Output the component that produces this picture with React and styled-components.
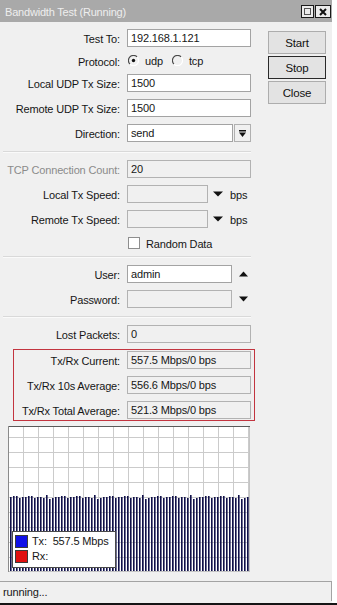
import React from 'react';
import styled, { createGlobalStyle } from 'styled-components';

const Global = createGlobalStyle`
  html, body { margin: 0; padding: 0; background: #fff; }
  body { font-family: "Liberation Sans", Arial, sans-serif; }
  #root { width: 337px; height: 605px; }
`;

const Page = styled.div`
  width: 337px;
  height: 605px;
  box-sizing: border-box;
  border-bottom: 2px solid #151515;
  background: #fff;
  overflow: hidden;
`;

const Window = styled.div`
  width: 332px;
  height: 603px;
  background: #f0f0f0;
  display: flex;
  flex-direction: column;
  font-size: 11px;
  letter-spacing: -0.15px;
  color: #161616;
`;

const TitleBar = styled.div`
  height: 22px;
  flex: none;
  background: #a9a9a9;
  display: flex;
  align-items: center;
  padding: 0 1px 0 5px;
  box-sizing: border-box;
`;

const Title = styled.div`
  flex: 1;
  color: #eeeeee;
  font-size: 11px;
  letter-spacing: -0.2px;
  padding-top: 2px;
`;

const TitleBtn = styled.div`
  width: ${p => p.$w}px;
  height: 13px;
  box-sizing: border-box;
  border: 1px solid #1a1a1a;
  background: #ececec;
  display: flex;
  align-items: center;
  justify-content: center;
  margin-left: 1px;
  margin-top: 1px;
`;

const Main = styled.div`
  flex: 1;
  display: flex;
  min-height: 0;
`;

const FormCol = styled.div`
  width: 255px;
  flex: none;
  display: flex;
  flex-direction: column;
  padding-top: 7px;
`;

const ButtonCol = styled.div`
  margin-left: 13px;
  padding-top: 9px;
  display: flex;
  flex-direction: column;
  gap: 2px;
`;

const Button = styled.div`
  width: 58px;
  height: 23px;
  box-sizing: border-box;
  border: 1px solid ${p => (p.$default ? '#2a2a2a' : '#adadad')};
  background: #e3e3e3;
  display: flex;
  align-items: center;
  justify-content: center;
  font-size: 11.5px;
  color: #111;
`;

const Row = styled.div`
  display: flex;
  align-items: center;
  height: ${p => p.$h || 18}px;
  margin-top: ${p => (p.$mt === undefined ? 7 : p.$mt)}px;
  flex: none;
`;

const Label = styled.div`
  width: ${p => p.$w || 120}px;
  flex: none;
  text-align: right;
  white-space: nowrap;
  padding-top: 2px;
  color: ${p => (p.$disabled ? '#8b8b8b' : '#161616')};
`;

const Field = styled.div`
  width: ${p => p.$w || 124}px;
  height: 18px;
  flex: none;
  box-sizing: border-box;
  margin-left: 7px;
  border: 1px solid ${p => (p.$ro ? '#b2b2b2' : '#a3a3a3')};
  background: ${p => (p.$ro ? '#f0f0f0' : '#ffffff')};
  padding: 1px 0 0 3px;
  line-height: 15px;
  white-space: nowrap;
  overflow: hidden;
`;

const DropBtn = styled.div`
  width: 17px;
  height: 18px;
  box-sizing: border-box;
  margin-left: 1px;
  border: 1px solid #b0b0b0;
  background: #f0f0f0;
  display: flex;
  align-items: center;
  justify-content: center;
`;

const Arrow = styled.div`
  margin-left: ${p => p.$ml}px;
  display: flex;
  align-items: center;
`;

const Unit = styled.div`
  margin-left: 7px;
  padding-top: 2px;
`;

const Options = styled.div`
  margin-left: 8px;
  display: flex;
  align-items: center;
  gap: 9px;
`;

const Option = styled.div`
  display: flex;
  align-items: center;
  gap: 6px;
`;

const Check = styled.div`
  width: 12px;
  height: 12px;
  box-sizing: border-box;
  margin-left: 128px;
  border: 1px solid #8e8e8e;
  background: #fff;
`;

const CheckText = styled.div`
  margin-left: 6px;
  padding-top: 1px;
`;

const Separator = styled.div`
  flex: none;
  margin: ${p => p.$mt}px 4px 0 3px;
  height: 0;
  border-top: 1px solid #d9d9d9;
  border-bottom: 1px solid #fafafa;
`;

const Highlight = styled.div`
  margin: 6px 0 0 13px;
  width: 242px;
  box-sizing: border-box;
  border: 1px solid #c2343f;
  padding: 1px 0;
  display: flex;
  flex-direction: column;
`;

const ChartBox = styled.div`
  position: relative;
  margin: 5px 0 0 8px;
  width: 242px;
  height: 146px;
  flex: none;
`;

const Legend = styled.div`
  position: absolute;
  left: 4px;
  top: 105px;
  width: 104px;
  height: 37px;
  box-sizing: border-box;
  border: 1px solid #4a4a4a;
  background: #fff;
  padding: 2px 0 0 2px;
  display: flex;
  flex-direction: column;
  gap: 1px;
`;

const LegendRow = styled.div`
  display: flex;
  align-items: center;
  height: 14px;
  font-size: 11px;
  white-space: pre;
`;

const Swatch = styled.div`
  width: 13px;
  height: 13px;
  box-sizing: border-box;
  border: 1px solid #3a3a3a;
  background: ${p => p.$c};
  margin-right: 4px;
`;

const StatusBar = styled.div`
  height: 20px;
  flex: none;
  box-sizing: border-box;
  margin-bottom: 2px;
  border-top: 1px solid #a3a3a3;
  border-right: 1px solid #a3a3a3;
  padding-left: 3px;
  display: flex;
  align-items: center;
`;

const Radio = ({ checked }) => (
  <svg width="11" height="11" viewBox="0 0 11 11">
    <path d="M9.1 1.9 A5 5 0 0 0 1.9 9.1" stroke="#4a4a4a" strokeWidth="1.2" fill="none" />
    <path d="M1.9 9.1 A5 5 0 0 0 9.1 1.9" stroke="#ffffff" strokeWidth="1.2" fill="none" />
    {checked && <circle cx="5.5" cy="5.5" r="1.7" fill="#111" />}
  </svg>
);

const TriDown = ({ w = 10 }) => (
  <svg width={w} height="6" viewBox={`0 0 ${w} 6`}>
    <path d={`M0 0.5 H${w} L${w / 2} 5.5 Z`} fill="#111" />
  </svg>
);

const TriUp = ({ w = 9 }) => (
  <svg width={w} height="6" viewBox={`0 0 ${w} 6`}>
    <path d={`M0 5.5 H${w} L${w / 2} 0.5 Z`} fill="#111" />
  </svg>
);

const DropIcon = () => (
  <svg width="9" height="9" viewBox="0 0 9 9">
    <rect x="1" y="1" width="7" height="1.5" fill="#111" />
    <path d="M1 3.5 H8 L4.5 8 Z" fill="#111" />
  </svg>
);

const Chart = () => {
  const W = 242;
  const H = 146;
  const vlines = [];
  for (let x = 15; x < W - 1; x += 15) vlines.push(x + 0.5);
  const hlines = [];
  for (let y = 11; y < H - 1; y += 15) hlines.push(y + 0.5);
  const jit = [0, -1, 1, 0, -2, 1, 0, -1, 1, 0, -1, 2, 0, 1, -1, 0];
  const bars = [];
  for (let i = 0; i * 3 + 2 < W - 1; i++) {
    bars.push({ x: 2 + i * 3, top: 71 + jit[(i * 7) % jit.length] });
  }
  return (
    <svg width={W} height={H} viewBox={`0 0 ${W} ${H}`}>
      <rect x="0" y="0" width={W} height={H} fill="#ffffff" />
      {vlines.map(x => (
        <line key={'v' + x} x1={x} y1="1" x2={x} y2={H - 1} stroke="#cbcbcb" strokeWidth="1" />
      ))}
      {hlines.map(y => (
        <line key={'h' + y} x1="1" y1={y} x2={W - 1} y2={y} stroke="#cbcbcb" strokeWidth="1" />
      ))}
      {bars.map(b => (
        <rect key={b.x} x={b.x} y={b.top} width="1.6" height={H - 1 - b.top} fill="#10104a" />
      ))}
      <line x1="0" y1="0.5" x2={W} y2="0.5" stroke="#5a5a5a" />
      <line x1="0.5" y1="0" x2="0.5" y2={H} stroke="#8a8a8a" />
      <line x1={W - 0.5} y1="1" x2={W - 0.5} y2={H} stroke="#c4c4c4" />
      <line x1="1" y1={H - 0.5} x2={W} y2={H - 0.5} stroke="#c4c4c4" />
    </svg>
  );
};

export default function App() {
  return (
    <>
      <Global />
      <Page>
        <Window>
          <TitleBar>
            <Title>Bandwidth Test (Running)</Title>
            <TitleBtn $w={13}>
              <svg width="7" height="7" viewBox="0 0 7 7">
                <rect x="0.5" y="0.5" width="6" height="6" fill="none" stroke="#555" />
              </svg>
            </TitleBtn>
            <TitleBtn $w={16}>
              <svg width="8" height="8" viewBox="0 0 8 8">
                <path d="M1 1 L7 7 M7 1 L1 7" stroke="#111" strokeWidth="2" />
              </svg>
            </TitleBtn>
          </TitleBar>

          <Main>
            <FormCol>
              <Row $mt={0}>
                <Label>Test To:</Label>
                <Field>192.168.1.121</Field>
              </Row>
              <Row $h={13}>
                <Label>Protocol:</Label>
                <Options>
                  <Option>
                    <Radio checked />
                    <span>udp</span>
                  </Option>
                  <Option>
                    <Radio />
                    <span>tcp</span>
                  </Option>
                </Options>
              </Row>
              <Row>
                <Label>Local UDP Tx Size:</Label>
                <Field>1500</Field>
              </Row>
              <Row>
                <Label>Remote UDP Tx Size:</Label>
                <Field>1500</Field>
              </Row>
              <Row>
                <Label>Direction:</Label>
                <Field $w={106}>send</Field>
                <DropBtn>
                  <DropIcon />
                </DropBtn>
              </Row>

              <Separator $mt={9} />

              <Row>
                <Label $disabled>TCP Connection Count:</Label>
                <Field $ro>20</Field>
              </Row>
              <Row>
                <Label>Local Tx Speed:</Label>
                <Field $ro $w={81} />
                <Arrow $ml={5}>
                  <TriDown />
                </Arrow>
                <Unit>bps</Unit>
              </Row>
              <Row>
                <Label>Remote Tx Speed:</Label>
                <Field $ro $w={81} />
                <Arrow $ml={5}>
                  <TriDown />
                </Arrow>
                <Unit>bps</Unit>
              </Row>
              <Row $h={12} $mt={9}>
                <Check />
                <CheckText>Random Data</CheckText>
              </Row>

              <Separator $mt={7} />

              <Row>
                <Label>User:</Label>
                <Field $w={105}>admin</Field>
                <Arrow $ml={7}>
                  <TriUp />
                </Arrow>
              </Row>
              <Row>
                <Label>Password:</Label>
                <Field $ro $w={105} />
                <Arrow $ml={7}>
                  <TriDown w={9} />
                </Arrow>
              </Row>

              <Separator $mt={8} />

              <Row>
                <Label>Lost Packets:</Label>
                <Field $ro>0</Field>
              </Row>

              <Highlight>
                <Row $mt={0}>
                  <Label $w={106}>Tx/Rx Current:</Label>
                  <Field $ro>557.5 Mbps/0 bps</Field>
                </Row>
                <Row>
                  <Label $w={106}>Tx/Rx 10s Average:</Label>
                  <Field $ro>556.6 Mbps/0 bps</Field>
                </Row>
                <Row>
                  <Label $w={106}>Tx/Rx Total Average:</Label>
                  <Field $ro>521.3 Mbps/0 bps</Field>
                </Row>
              </Highlight>

              <ChartBox>
                <Chart />
                <Legend>
                  <LegendRow>
                    <Swatch $c="#1010e8" />
                    {'Tx:  557.5 Mbps'}
                  </LegendRow>
                  <LegendRow>
                    <Swatch $c="#e01010" />
                    {'Rx:'}
                  </LegendRow>
                </Legend>
              </ChartBox>
            </FormCol>

            <ButtonCol>
              <Button>Start</Button>
              <Button $default>Stop</Button>
              <Button>Close</Button>
            </ButtonCol>
          </Main>

          <StatusBar>running...</StatusBar>
        </Window>
      </Page>
    </>
  );
}
